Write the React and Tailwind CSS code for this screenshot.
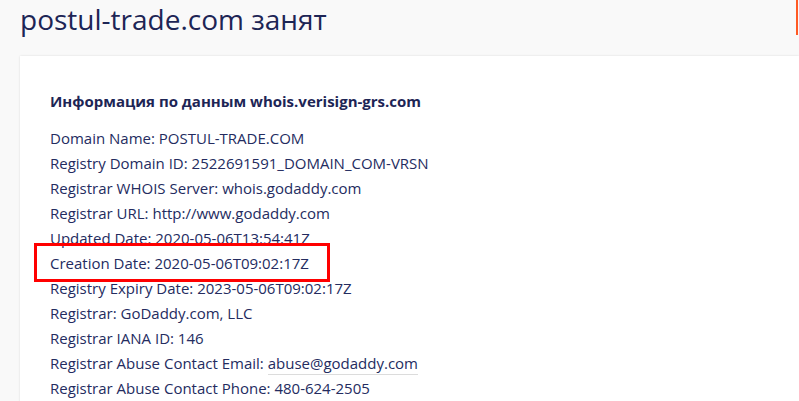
import React from 'react';

const rows = [
  'Domain Name: POSTUL-TRADE.COM',
  'Registry Domain ID: 2522691591_DOMAIN_COM-VRSN',
  'Registrar WHOIS Server: whois.godaddy.com',
  'Registrar URL: http://www.godaddy.com',
  'Updated Date: 2020-05-06T13:54:41Z',
];

const rowsAfter = [
  'Registry Expiry Date: 2023-05-06T09:02:17Z',
  'Registrar: GoDaddy.com, LLC',
  'Registrar IANA ID: 146',
];

export default function App() {
  return (
    <div
      className="w-[799px] h-[401px] overflow-hidden bg-[#f9f9f9] text-[#242c5f]"
      style={{ fontFamily: '"Open Sans", "Noto Sans", sans-serif' }}
    >
      <div className="flex items-start h-[56px]">
        <h1 className="pl-[20px] text-[28px] leading-[38px] text-[#1d2555] flex-1">
          postul-trade.com занят
        </h1>
        <div className="w-[2px] h-[35px] bg-[#ff5a24] mr-[1px]" />
      </div>
      <div className="ml-[20px] bg-white h-[400px] shadow-[0_0_2px_rgba(0,0,0,0.12)] pt-[33px] pl-[30px] text-[15px] leading-[25px]">
        <h2 className="mb-[12px] font-bold text-[15px] leading-[25px] text-[#1d2555]">
          Информация по данным whois.verisign-grs.com
        </h2>
        {rows.map((r) => (
          <div key={r}>{r}</div>
        ))}
        <div className="relative">
          Creation Date: 2020-05-06T09:02:17Z
          <div className="absolute -left-[16px] -top-[8px] w-[296px] h-[39px] border-[3px] border-[#ff0000]" />
        </div>
        {rowsAfter.map((r) => (
          <div key={r}>{r}</div>
        ))}
        <div>
          Registrar Abuse Contact Email:{' '}
          <span className="border-b border-[#dcdcdc] pb-[1px]">abuse@godaddy.com</span>
        </div>
        <div>Registrar Abuse Contact Phone: 480-624-2505</div>
      </div>
    </div>
  );
}
